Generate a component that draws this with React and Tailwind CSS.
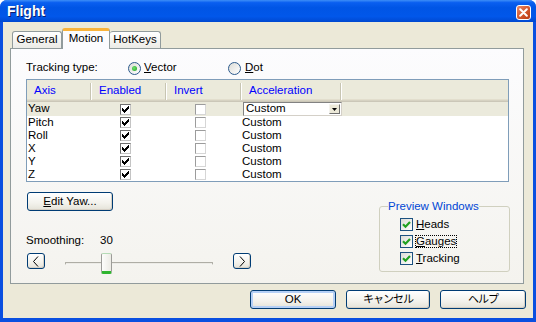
import React from "react";

const font = "font-['Liberation_Sans','Noto_Sans_CJK_JP',sans-serif]";
const axes = ["Yaw", "Pitch", "Roll", "X", "Y", "Z"];
const previews = [
  { key: "H", rest: "eads" },
  { key: "G", rest: "auges", focus: true },
  { key: "T", rest: "racking" },
];

function ListCheck({ checked }) {
  return (
    <span
      className={`flex h-[11px] w-[11px] items-center justify-center border bg-white ${
        checked
          ? "border-[#6e6e6e] border-r-[#c4c4c4] border-b-[#c4c4c4]"
          : "border-[#9c9c9c] border-r-[#d6d6d6] border-b-[#d6d6d6]"
      }`}
    >
      {checked && (
        <svg width="7" height="7" viewBox="0 0 7 7" shapeRendering="crispEdges">
          <polygon points="0,2 2,4 6,0 7,0 7,3 2,7 0,5" fill="#000" />
        </svg>
      )}
    </span>
  );
}

function XpCheck() {
  return (
    <span className="flex h-[13px] w-[13px] items-center justify-center border border-[#1c5180] bg-[linear-gradient(135deg,#dcdcd7,#ffffff)]">
      <svg width="9" height="9" viewBox="0 0 9 9">
        <path d="M1 4.2 L3.5 6.7 L8 2" fill="none" stroke="#21a121" strokeWidth="2.2" />
      </svg>
    </span>
  );
}

function Radio({ checked }) {
  return (
    <span className="flex h-[13px] w-[13px] items-center justify-center rounded-full border border-[#2c5a8c] bg-[linear-gradient(135deg,#dcdcd7,#ffffff)]">
      {checked && (
        <span className="h-[5px] w-[5px] rounded-full bg-[radial-gradient(circle_at_40%_40%,#6fe06f,#21a121)]" />
      )}
    </span>
  );
}

function XpButton({ children, className = "", isDefault = false }) {
  return (
    <button
      className={`flex items-center justify-center rounded-[3px] border border-[#003c74] bg-[linear-gradient(to_bottom,#ffffff,#f3f2ec_60%,#e4e2d8)] text-black ${
        isDefault ? "shadow-[inset_0_0_0_2px_#b5d0f6]" : "shadow-[inset_-1px_-1px_0_#d6d0c5]"
      } ${className}`}
    >
      {children}
    </button>
  );
}

function Chevron({ dir }) {
  return (
    <svg width="8" height="11" viewBox="0 0 8 11">
      <polyline
        points={dir === "left" ? "6,0.5 1.5,5.5 6,10.5" : "2,0.5 6.5,5.5 2,10.5"}
        fill="none"
        stroke="#000"
        strokeWidth="1"
      />
    </svg>
  );
}

function Slider({ value }) {
  return (
    <div className="relative flex h-[21px] w-[188px] items-center px-[20px]">
      <div className="h-[3px] w-full rounded-[1px] border border-[#aeada5] border-b-[#f5f5f2] bg-[#ecebe6]" />
      <div
        className="absolute top-0 h-[21px] w-[11px] rounded-[2px] border border-[#9c9c98] border-t-[#b5dbb5] border-b-[3px] border-b-[#2fb52f] bg-[linear-gradient(to_right,#fdfdfb,#ecebe5)]"
        style={{ left: 20 + value * 1.2 }}
      />
    </div>
  );
}

export default function App() {
  return (
    <div className={`h-[322px] w-[536px] bg-white ${font}`}>
      <div className="flex h-[322px] w-[536px] flex-col overflow-hidden rounded-t-[7px] bg-[#0a4fe0]">
        {/* Title bar */}
        <div className="flex h-[22px] items-center justify-between bg-[linear-gradient(to_bottom,#3d8ef7_0%,#0a5ff0_12%,#0055e5_35%,#0157ea_75%,#0048d0_100%)] pl-[7px] pr-[5px]">
          <span className="text-[14px] font-bold leading-none text-white [text-shadow:1px_1px_0_#0a1e6e]">
            Flight
          </span>
          <span className="mt-[2px] flex h-[15px] w-[15px] items-center justify-center rounded-[3px] border border-white bg-[linear-gradient(135deg,#eb8a68,#d2552c_55%,#b83a12)]">
            <svg width="9" height="9" viewBox="0 0 9 9">
              <path d="M1.2 1.2 L7.8 7.8 M7.8 1.2 L1.2 7.8" stroke="#fff" strokeWidth="2" strokeLinecap="round" />
            </svg>
          </span>
        </div>

        {/* Body */}
        <div className="mx-[3px] mb-[4px] flex flex-1 flex-col bg-[#ece9d8] pl-[7px] pt-[6px] text-[11.5px] text-black">
          {/* Tabs */}
          <div className="ml-[2px] flex h-[20px] items-end">
            <div className="flex h-[17px] w-[50px] items-center justify-center rounded-t-[3px] border border-b-0 border-[#919b9c] bg-[linear-gradient(to_bottom,#ffffff,#ecebe6)] leading-none">
              General
            </div>
            <div className="relative z-10 -mb-[1px] flex h-[21px] w-[48px] items-center justify-center rounded-t-[3px] border-x border-t-[3px] border-[#919b9c] border-t-[#f9b33b] bg-[#fcfcfe] pb-[2px] leading-none">
              Motion
            </div>
            <div className="flex h-[17px] w-[51px] items-center justify-center rounded-t-[3px] border border-b-0 border-l-0 border-[#919b9c] bg-[linear-gradient(to_bottom,#ffffff,#ecebe6)] leading-none">
              HotKeys
            </div>
          </div>

          {/* Panel */}
          <div className="flex h-[236px] w-[514px] flex-col border border-[#919b9c] bg-[linear-gradient(to_bottom,#fcfcfe,#f4f3ee)] pl-[15px] pr-[14px] pt-[12px]">
            <div className="flex h-[14px] items-center leading-none">
              <span className="w-[102px]">Tracking type:</span>
              <span className="flex w-[100px] items-center gap-[3px]">
                <Radio checked />
                <span>
                  <span className="underline">V</span>ector
                </span>
              </span>
              <span className="flex items-center gap-[4px]">
                <Radio />
                <span>
                  <span className="underline">D</span>ot
                </span>
              </span>
            </div>

            {/* List view */}
            <div className="mt-[4px] flex w-[483px] flex-col border border-[#7f9db9] bg-white">
              <div className="grid h-[22px] grid-cols-[65px_75px_75px_100px_1fr] bg-[#ebeadb] text-[#0000ff] shadow-[inset_0_-1px_0_#cbc7b8,inset_0_-2px_0_#d6d2c2,inset_0_-3px_0_#e2decd]">
                {["Axis", "Enabled", "Invert", "Acceleration"].map((h) => (
                  <div key={h} className="flex items-center justify-between pb-[1px] pl-[7px]">
                    <span className="leading-none">{h}</span>
                    <span className="mt-[1px] h-[17px] w-[2px] border-l border-r border-l-[#c7c5b2] border-r-white" />
                  </div>
                ))}
                <div />
              </div>
              {axes.map((a, i) => (
                <div
                  key={a}
                  className={`grid grid-cols-[65px_75px_75px_100px_1fr] items-center leading-none ${
                    i === 0 ? "h-[14px] bg-[#ebeadc]" : "h-[13px]"
                  }`}
                >
                  <span className="pl-[1px]">{a}</span>
                  <span className="flex justify-center pr-[8px]">
                    <ListCheck checked />
                  </span>
                  <span className="flex justify-center pr-[8px]">
                    <ListCheck />
                  </span>
                  {i === 0 ? (
                    <span className="ml-[1px] flex h-[14px] items-center justify-between border border-[#828282] border-r-[#d4d0c8] border-b-[#d4d0c8] bg-white pl-[2px] pr-[1px]">
                      <span>Custom</span>
                      <span className="flex h-[10px] w-[11px] items-center justify-center border border-[#f4f3ee] border-r-[#6e6e6e] border-b-[#6e6e6e] bg-[#ece9d8]">
                        <svg width="5" height="3" viewBox="0 0 5 3">
                          <polygon points="0,0 5,0 2.5,3" fill="#000" />
                        </svg>
                      </span>
                    </span>
                  ) : (
                    <span>Custom</span>
                  )}
                  <span />
                </div>
              ))}
            </div>

            {/* Lower area */}
            <div className="mt-[10px] flex justify-between">
              <div className="flex flex-col">
                <XpButton className="ml-[1px] h-[19px] w-[86px] leading-none">
                  <span>
                    <span className="underline">E</span>dit Yaw...
                  </span>
                </XpButton>
                <div className="mt-[23px] flex h-[14px] items-center leading-none">
                  <span className="w-[74px]">Smoothing:</span>
                  <span>30</span>
                </div>
                <div className="mt-[5px] flex items-start">
                  <XpButton className="ml-[1px] h-[16px] w-[18px]">
                    <Chevron dir="left" />
                  </XpButton>
                  <Slider value={30} />
                  <XpButton className="h-[16px] w-[18px]">
                    <Chevron dir="right" />
                  </XpButton>
                </div>
              </div>

              <fieldset className="mt-[7px] -mr-[1px] h-[73px] w-[131px] rounded-[3px] border border-[#d0d0bf] pl-[8px]">
                <legend className="px-0 leading-[14px] text-[#0046d5]">Preview Windows</legend>
                <div className="ml-[12px] mt-[3px] flex flex-col">
                  {previews.map((p) => (
                    <div key={p.key} className="flex h-[17px] items-center gap-[3px] leading-none">
                      <XpCheck />
                      <span className={p.focus ? "-ml-[1px] border border-dotted border-black" : ""}>
                        <span className="underline">{p.key}</span>
                        {p.rest}
                      </span>
                    </div>
                  ))}
                </div>
              </fieldset>
            </div>
          </div>

          {/* Dialog buttons */}
          <div className="mt-[6px] flex w-[516px] justify-end gap-[10px] leading-none">
            <XpButton isDefault className="h-[19px] w-[86px]">
              OK
            </XpButton>
            <XpButton className="h-[19px] w-[84px] text-[11px] tracking-[-1px]">キャンセル</XpButton>
            <XpButton className="h-[19px] w-[86px] text-[11px] tracking-[-1px]">ヘルプ</XpButton>
          </div>
        </div>
      </div>
    </div>
  );
}
